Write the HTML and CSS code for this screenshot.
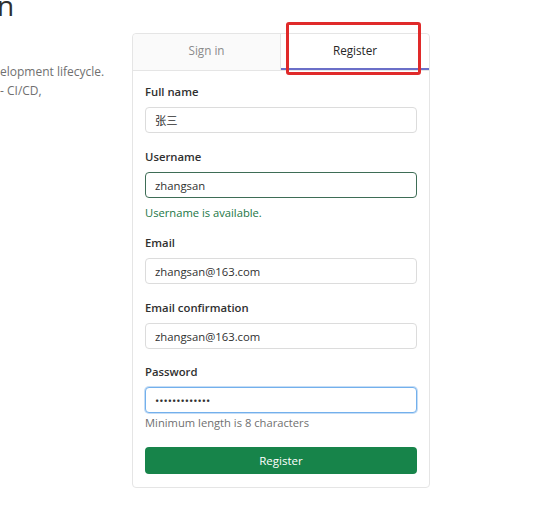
FILE: index.html
```html
<!DOCTYPE html>
<html lang="en">
<head>
<meta charset="utf-8">
<title>Register</title>
<link rel="stylesheet" href="styles.css">
</head>
<body>
<div class="page">
  <div class="intro">
    <h1 class="intro-title">n</h1>
    <p class="intro-text">elopment lifecycle.<br>- CI/CD,</p>
  </div>
  <div class="card">
    <div class="tabs">
      <div class="tab">Sign in</div>
      <div class="tab tab-active">Register</div>
    </div>
    <form class="form">
      <div class="field">
        <label class="label">Full name</label>
        <input class="input" type="text" value="张三">
      </div>
      <div class="field">
        <label class="label">Username</label>
        <input class="input input-valid" type="text" value="zhangsan">
        <div class="help help-valid">Username is available.</div>
      </div>
      <div class="field">
        <label class="label">Email</label>
        <input class="input" type="text" value="zhangsan@163.com">
      </div>
      <div class="field">
        <label class="label">Email confirmation</label>
        <input class="input" type="text" value="zhangsan@163.com">
      </div>
      <div class="field field-tight">
        <label class="label">Password</label>
        <input class="input input-focus" type="password" value="zhangsan12345">
        <div class="help help-muted">Minimum length is 8 characters</div>
      </div>
      <button class="btn" type="button">Register</button>
    </form>
    <div class="annotation"></div>
  </div>
</div>
</body>
</html>
```

FILE: styles.css
```css
html, body {
  margin: 0;
  padding: 0;
  background: #ffffff;
}

body {
  font-family: "Open Sans", "Noto Sans CJK SC", sans-serif;
  color: #303030;
  font-size: 11.3px;
}

.page {
  display: flex;
  align-items: flex-start;
}

.intro {
  width: 132px;
  flex: none;
  overflow: hidden;
}

.intro-title {
  margin: -12px 0 0 -3px;
  font-size: 28px;
  font-weight: 400;
  line-height: 34px;
  color: #303030;
}

.intro-text {
  margin: 40px 0 0 0;
  font-size: 12px;
  line-height: 19px;
  color: #707070;
  white-space: nowrap;
}

.card {
  position: relative;
  width: 296px;
  margin-top: 33px;
  border: 1px solid #e5e5e5;
  border-radius: 4px;
  background: #fff;
}

.tabs {
  display: grid;
  grid-template-columns: 1fr 1fr;
  border-bottom: 1px solid #e5e5e5;
}

.tab {
  box-sizing: border-box;
  height: 36px;
  padding-bottom: 4px;
  display: flex;
  align-items: center;
  justify-content: center;
  font-size: 11.7px;
  color: #8a8a8a;
  background: #fafafa;
  border-right: 1px solid #e5e5e5;
  border-top-left-radius: 4px;
}

.tab-active {
  color: #262626;
  background: #fff;
  border-right: 0;
  border-radius: 0 4px 0 0;
  box-shadow: inset 0 -2px 0 #6b6fc8;
}

.form {
  display: flex;
  flex-direction: column;
  padding: 12px 12px 13px;
}

.field {
  display: flex;
  flex-direction: column;
  margin-bottom: 15px;
}

.field-tight {
  margin-top: -1px;
}

.label {
  font-weight: 600;
  font-size: 11.3px;
  line-height: 18px;
  margin-bottom: 6px;
}

.input {
  box-sizing: border-box;
  height: 26px;
  width: 100%;
  margin: 0;
  padding: 0 9px;
  border: 1px solid #dcdcdc;
  border-radius: 4px;
  font-family: "Open Sans", "Noto Sans CJK SC", sans-serif;
  font-size: 11.3px;
  color: #303030;
  background: #fff;
  outline: none;
}

.input-valid {
  border-color: #3e6d56;
}

.input-focus {
  border-color: #73b0ec;
  box-shadow: 0 0 0 1px #c5ddf6;
}

.help {
  font-size: 11.2px;
}

.help-valid {
  margin-top: 8px;
  line-height: 14px;
  color: #217645;
  margin-bottom: -1px;
}

.help-muted {
  margin-top: 2px;
  line-height: 16px;
  color: #707070;
  margin-bottom: 1px;
}

.btn {
  height: 27px;
  border: 0;
  border-radius: 4px;
  background: #17844a;
  color: #fff;
  font-family: "Open Sans", sans-serif;
  font-size: 11.5px;
  cursor: pointer;
}

.annotation {
  position: absolute;
  left: 153px;
  top: -12px;
  width: 129px;
  height: 47px;
  border: 3px solid #e02a2a;
  border-radius: 3px;
  pointer-events: none;
}
```
